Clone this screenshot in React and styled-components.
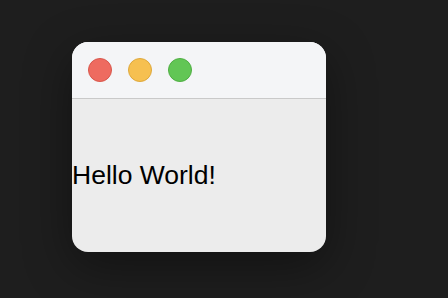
import React from 'react'
import styled, { createGlobalStyle } from 'styled-components'

const GlobalStyle = createGlobalStyle`
  html, body {
    margin: 0;
    padding: 0;
    background: #1e1e1e;
    font-family: "Liberation Sans", Arial, sans-serif;
  }
`

const Stage = styled.div`
  width: 448px;
  height: 298px;
  padding: 42px 0 0 72px;
  box-sizing: border-box;
`

const Window = styled.div`
  width: 254px;
  height: 210px;
  border-radius: 16px;
  overflow: hidden;
  display: flex;
  flex-direction: column;
  background: #ececec;
  box-shadow: 0 14px 48px rgba(0, 0, 0, 0.4);
`

const TitleBar = styled.div`
  height: 56px;
  flex-shrink: 0;
  display: flex;
  align-items: center;
  gap: 16px;
  padding: 0 16px;
  background: #f4f5f7;
  border-bottom: 1px solid #c9c9c9;
`

const Light = styled.span`
  width: 24px;
  height: 24px;
  border-radius: 50%;
  box-sizing: border-box;
  background: ${p => p.color};
  border: 1px solid ${p => p.edge};
`

const Body = styled.div`
  flex: 1;
  display: flex;
  align-items: center;
  color: #000;
  font-size: 26.5px;
  padding-bottom: 0;
`

const App = () => {
  const lights = [
    { color: '#ee6b60', edge: '#d8574c' },
    { color: '#f6c050', edge: '#dea83c' },
    { color: '#62c655', edge: '#4fae43' },
  ]
  return (
    <>
      <GlobalStyle />
      <Stage>
        <Window>
          <TitleBar>
            {lights.map(l => (
              <Light key={l.color} color={l.color} edge={l.edge} />
            ))}
          </TitleBar>
          <Body>Hello World!</Body>
        </Window>
      </Stage>
    </>
  )
}

export default App
